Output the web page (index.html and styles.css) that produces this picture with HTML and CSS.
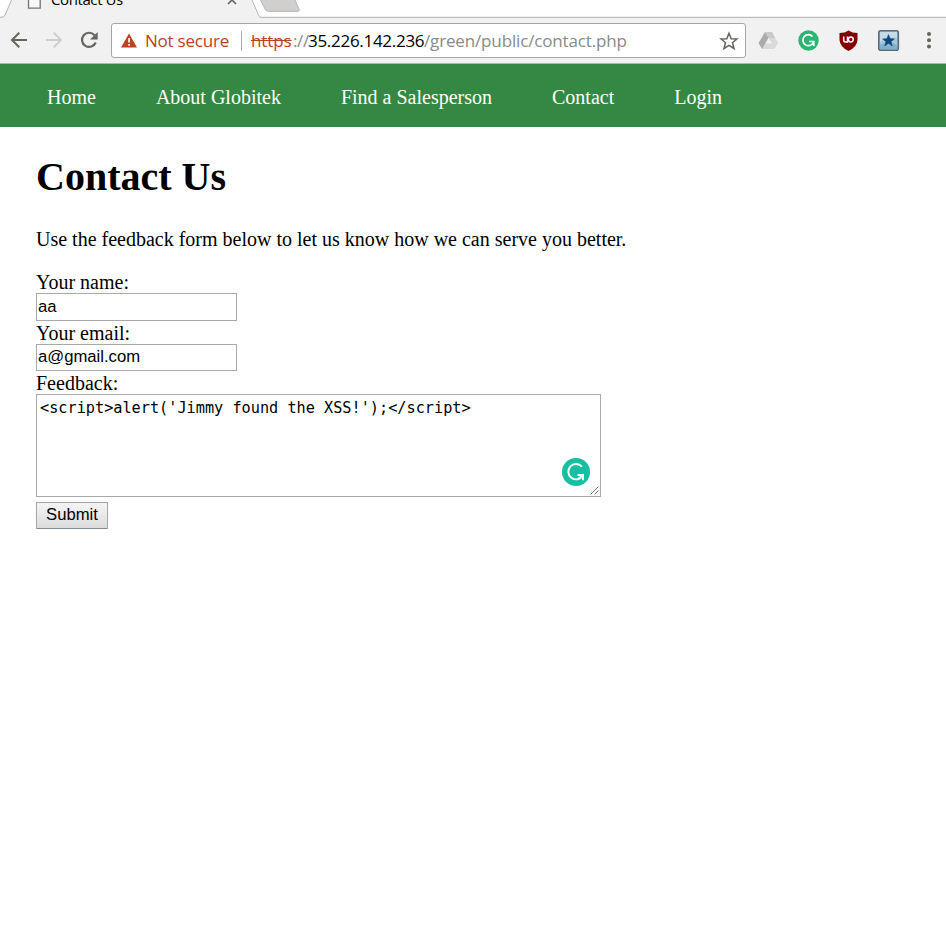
FILE: index.html
```html
<!DOCTYPE html>
<html lang="en">
<head>
<meta charset="utf-8">
<title>Contact Us</title>
<link rel="stylesheet" href="styles.css">
</head>
<body>
<header class="browser">
  <div class="tabstrip">
    <svg class="tab-shapes" width="946" height="18" viewBox="0 0 946 18">
      <path fill="#fff" d="M0 0H12L5 15.5Q4 17 2 17H0ZM251 0H946V17H261Q259 17 258 15.5Z"/>
      <path fill="none" stroke="#b0b0b0" d="M12 -1L5 15Q4 17.200 2 17.200H0M251.500 -1L258.500 15Q259.500 17.300 261 17.300H946"/>
      <path fill="#d0cfce" stroke="#b7b6b5" d="M260 -1L265 9Q266 11.300 268 11.300H298Q300 11 299 9L294.500 -1Z"/>
      <path fill="#fff" fill-opacity=".5" stroke="#77736f" stroke-width="1.300" d="M28.500 -5H40.200V8.200H28.500Z"/>
      <path stroke="#6b6b66" stroke-width="1.700" d="M228 4L236 -4M236 4L228 -4"/>
    </svg>
    <span class="tab-title">Contact Us</span>
  </div>
  <div class="toolbar">
    <svg class="nav-icons" width="111" height="45" viewBox="0 18 111 45" fill="none" stroke-width="2">
      <path stroke="#65665f" d="M27 40H12.500M19.300 32.700L12 40L19.300 47.300"/>
      <path stroke="#cfcfce" d="M46 40H60.500M53.700 32.700L61 40L53.700 47.300"/>
      <path stroke="#65665f" stroke-width="2.200" d="M94.500 35.200A7.100 7.100 0 1 0 95.700 42.500"/>
      <path fill="#65665f" d="M97.700 32V39.500H90Z"/>
    </svg>
    <div class="address">
      <svg class="warning" width="17" height="15" viewBox="0 0 17 15"><path fill="#bf4023" d="M8 .5L16 14.500H0Z"/><path fill="#fff" d="M7.200 5H8.900V9.500H7.200ZM7.200 11H8.900V12.700H7.200Z"/></svg>
      <span class="not-secure">Not secure</span>
      <span class="divider"></span>
      <span class="url"><span class="scheme">https</span><span class="slashes">://</span><span class="host">35.226.142.236</span><span class="path">/green/public/contact.php</span></span>
      <svg class="star" width="20" height="20" viewBox="0 0 20 20"><path fill="none" stroke="#65665f" stroke-width="1.500" d="M10 2.300L12.200 7.700L18 8L13.500 11.800L15 17.500L10 14.300L5 17.500L6.500 11.800L2 8L7.800 7.700Z"/></svg>
    </div>
    <svg class="extensions" width="200" height="45" viewBox="746 18 200 45">
      <path fill="#dadada" d="M765 32H772L778 43L774.500 49H762Z"/>
      <path fill="#ababab" d="M765 32L768.500 38L762 49L758.500 43Z"/>
      <path fill="#c9c9c9" d="M765 32H772L775 38H768.500Z"/>
      <path fill="#f1f1f1" d="M768.500 38L772 43.500H765.500Z"/>
      <circle cx="808.500" cy="40.500" r="10.200" fill="#2bb573"/>
      <path fill="none" stroke="#fff" stroke-width="1.700" d="M812.500 36.500A5.500 5.500 0 1 0 813.500 42.200M809 41.500H813.800V46"/>
      <path fill="#800000" d="M848.500 30.500Q852 33 857.500 33V40Q857 47 848.500 51Q840 47 839.500 40V33Q845 33 848.500 30.500Z"/>
      <path fill="none" stroke="#fff" stroke-width="1.500" d="M843.700 36.500V40Q843.700 42 845.500 42H847.500V36.500"/>
      <circle cx="850.800" cy="39.500" r="2.400" fill="none" stroke="#fff" stroke-width="1.500"/>
      <rect x="878.800" y="30.800" width="19.500" height="19.500" rx="2" fill="#a1c8dd" stroke="#586b7d" stroke-width="1.600"/>
      <path fill="#c4dce8" d="M880 32H897V38Q889 36 880 42Z"/>
      <path fill="#7fb0d2" d="M880 45L885 43L888 46L892 43L897 45V49H880Z"/>
      <path fill="#0d4587" stroke="#314b67" stroke-width=".5" d="M888.500 34.500L890.200 38.600L894.500 38.900L891.200 41.600L892.300 46L888.500 43.600L884.700 46L885.800 41.600L882.500 38.900L886.800 38.600Z"/>
      <g fill="#65665f"><circle cx="929" cy="34" r="2"/><circle cx="929" cy="40.200" r="2"/><circle cx="929" cy="46.400" r="2"/></g>
    </svg>
  </div>
</header>
<nav class="menu">
  <a>Home</a><a>About Globitek</a><a>Find a Salesperson</a><a>Contact</a><a>Login</a>
</nav>
<main>
  <h1>Contact Us</h1>
  <p>Use the feedback form below to let us know how we can serve you better.</p>
  <form>
    <label for="name">Your name:</label>
    <input id="name" class="name" type="text" value="aa">
    <label for="email">Your email:</label>
    <input id="email" class="email" type="text" value="a@gmail.com">
    <label for="feedback">Feedback:</label>
    <div class="feedback">
      <textarea id="feedback" spellcheck="false">&lt;script&gt;alert('Jimmy found the XSS!');&lt;/script&gt;</textarea>
      <svg class="checker" width="28" height="28" viewBox="0 0 28 28"><circle cx="14" cy="14" r="14" fill="#15bf9f"/><path fill="none" stroke="#fff" stroke-width="1.900" d="M19.900 8.700A7.700 7.700 0 1 0 20.700 17.500M15.500 17H21V22.300M20.500 17.500L16.500 20.500"/></svg>
      <svg class="grip" width="9" height="9" viewBox="0 0 9 9"><path stroke="#72726e" d="M.5 8.500L8.500 .5M4.500 8.500L8.500 4.500"/></svg>
    </div>
    <button type="button">Submit</button>
  </form>
</main>
</body>
</html>
```

FILE: styles.css
```css
* { box-sizing: border-box; }
html { overflow: hidden; background: #fff; }
body { margin: 0; color: #000; font: 20px/23px "Liberation Serif", serif; }
svg { display: block; flex: none; }
.browser { height: 64px; background: #f1f1f1; border-bottom: 1px solid #b3b3b3; font-family: "Open Sans", sans-serif; }
.tabstrip { position: relative; height: 18px; overflow: hidden; }
.tab-title { position: absolute; left: 51px; top: -11px; font-size: 15px; line-height: 21px; letter-spacing: -.4px; }
.toolbar { display: flex; height: 45px; }
.address { display: flex; align-items: center; width: 635px; height: 35px; margin-top: 5px; padding-left: 9px; background: #fff; border: 1px solid #a6a6a6; border-radius: 3px; font-size: 17px; line-height: 24px; white-space: nowrap; }
.warning { margin-right: 7px; }
.not-secure { width: 96px; color: #bd4123; letter-spacing: -.22px; }
.divider { width: 1px; height: 20px; margin-right: 9px; background: #aaa; }
.url { display: flex; width: 470px; color: #868c88; }
.scheme { width: 42px; color: #bd4123; letter-spacing: -.1px; text-decoration: line-through; }
.slashes { width: 15px; letter-spacing: -.4px; }
.host { width: 116px; color: #000; letter-spacing: -.29px; }
.path { letter-spacing: -.15px; }
.star { margin-left: -2px; }
.menu { display: flex; gap: 60px; height: 63px; padding: 22px 47px 0; background: #358843; color: #fff; }
main { padding: 27px 36px 0; }
h1 { margin: 0; font-size: 40px; line-height: 46px; }
p { margin: 28px 0 19px; }
form { display: flex; flex-direction: column; align-items: flex-start; }
label { height: 23px; padding-top: 1px; }
input { width: 201px; height: 27px; padding: 0 1px 1px; border: 1px solid #a9a9a9; border-radius: 0; font: 16.67px "Liberation Sans", sans-serif; outline: 0; }
.name { height: 28px; }
.feedback { position: relative; }
textarea { display: block; width: 565px; height: 103px; padding: 3px; border: 1px solid #a9a9a9; border-radius: 0; outline: 0; resize: none; overflow: hidden; font: 15.23px/20px "DejaVu Sans Mono", monospace; }
.checker { position: absolute; right: 11px; bottom: 11px; }
.grip { position: absolute; right: 2px; bottom: 2px; }
button { width: 72px; height: 27px; margin-top: 5px; padding: 0 0 2px; border: 1px solid #a5a5a5; border-bottom-color: #858b98; border-radius: 1px; background: linear-gradient(#f5f5f5, #dcdcdc); color: #000; font: 16.67px "Liberation Sans", sans-serif; }
```
